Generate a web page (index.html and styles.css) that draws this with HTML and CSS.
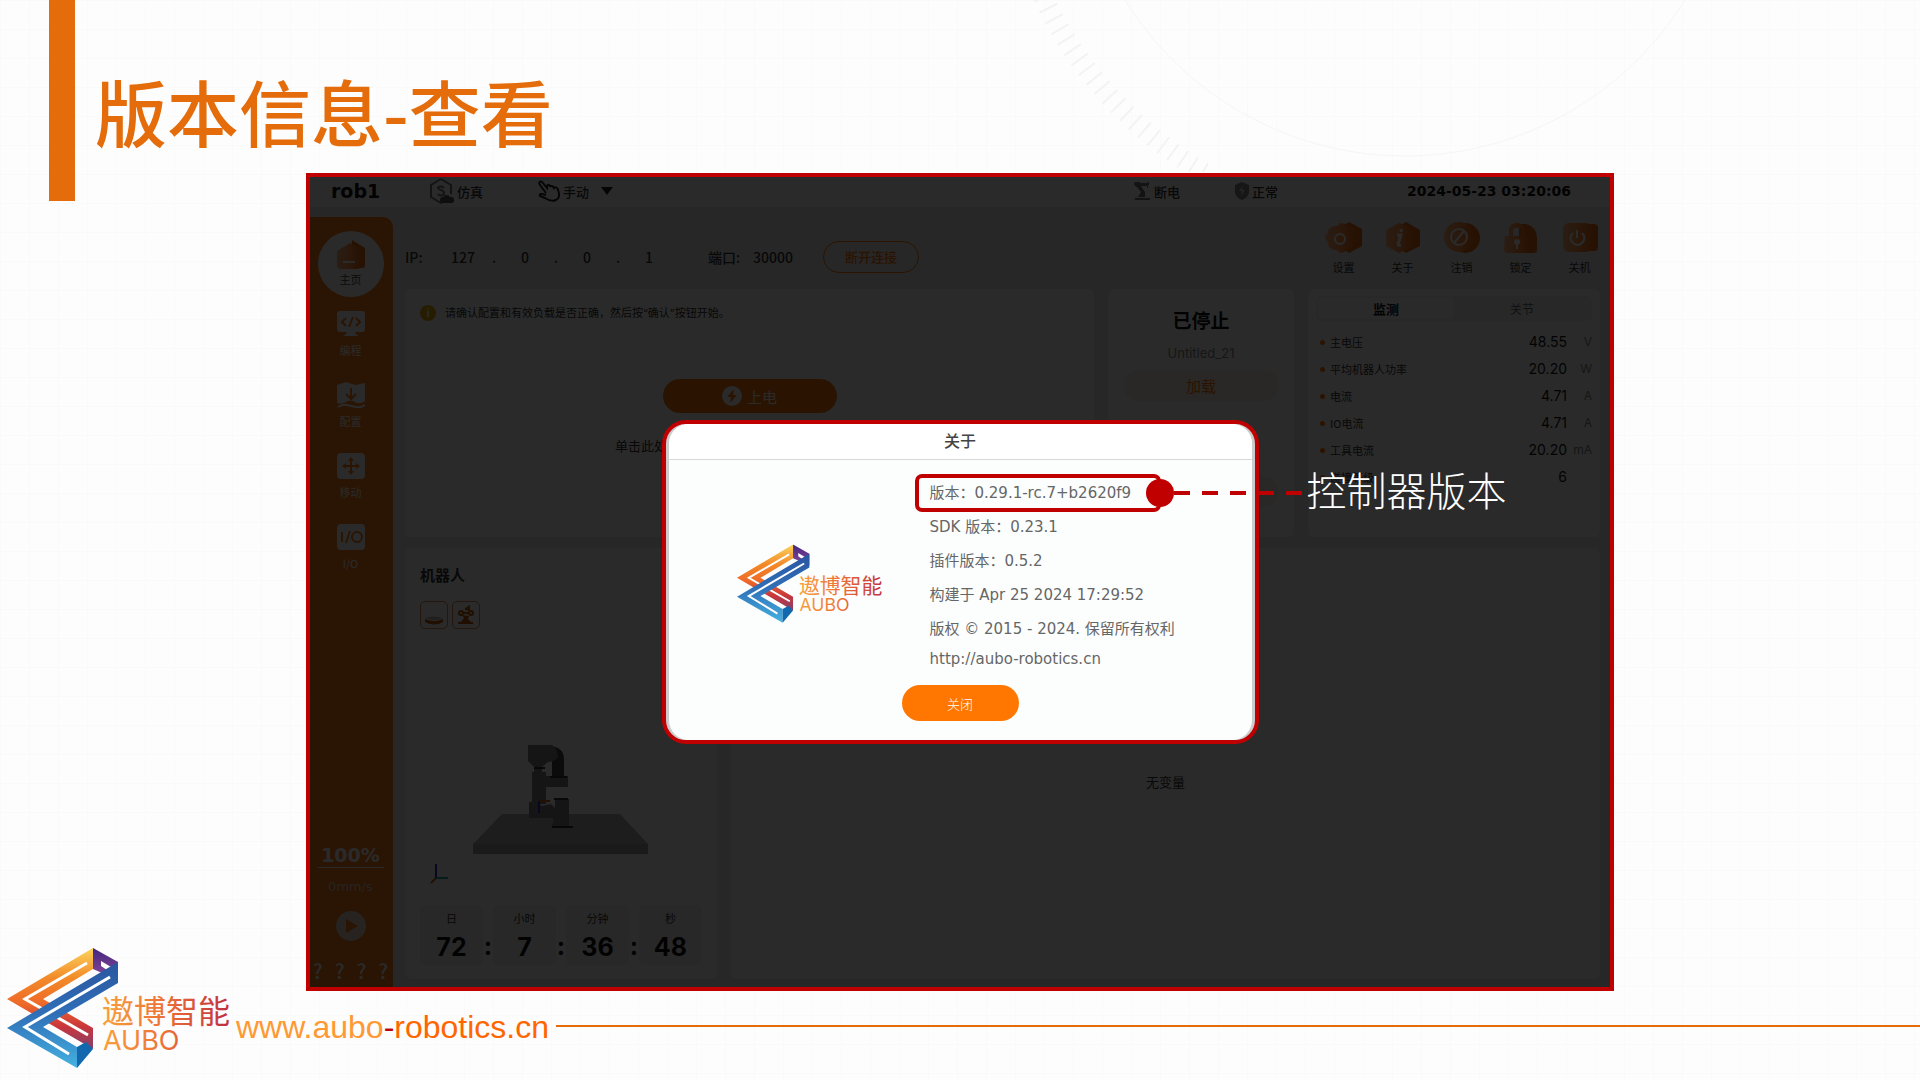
FILE: index.html
```html
<!DOCTYPE html>
<html lang="zh-CN">
<head>
    <meta charset="UTF-8">
    <meta name="viewport" content="width=device-width, initial-scale=1.0">
    <title>版本信息-查看</title>
    <link rel="stylesheet" href="styles.css">
</head>
<body>
    <!-- shared symbols -->
    <svg class="defs" width="0" height="0" aria-hidden="true">
        <defs>
            <linearGradient id="warm" x1="0" y1="0" x2="0" y2="1">
                <stop offset="0" stop-color="#fbd45c"/>
                <stop offset="0.3" stop-color="#f28a28"/>
                <stop offset="0.55" stop-color="#ef6a28"/>
                <stop offset="0.78" stop-color="#c9363c"/>
                <stop offset="1" stop-color="#84406c"/>
            </linearGradient>
            <linearGradient id="cool" x1="0" y1="0" x2="0" y2="1">
                <stop offset="0" stop-color="#2a559f"/>
                <stop offset="0.5" stop-color="#3070b8"/>
                <stop offset="1" stop-color="#45b2e0"/>
            </linearGradient>
            <linearGradient id="violet" x1="0" y1="0" x2="0" y2="1">
                <stop offset="0" stop-color="#43277f"/>
                <stop offset="1" stop-color="#8a4a9c"/>
            </linearGradient>
            <linearGradient id="brand" gradientUnits="userSpaceOnUse" x1="96" y1="0" x2="222" y2="0">
                <stop offset="0" stop-color="#f9a03c"/>
                <stop offset="0.5" stop-color="#ec7036"/>
                <stop offset="1" stop-color="#bf2f40"/>
            </linearGradient>
            <linearGradient id="icon-orange" x1="0" y1="0" x2="1" y2="0">
                <stop offset="0" stop-color="#ffb27a"/>
                <stop offset="0.6" stop-color="#ff8a3c"/>
                <stop offset="1" stop-color="#e86a10"/>
            </linearGradient>
            <symbol id="logo" viewBox="0 0 224 121">
                <path fill="url(#warm)" d="M86 0 0 51l86 50V80L36 51l50-30z"/>
                <path fill="none" stroke="#fff" stroke-width="3" d="M80 15 18 51l63 36"/>
                <path fill="url(#violet)" d="m86 0 25 14v18L86 21z"/>
                <path fill="#fff" d="m94 13 10 6-4 3-6-4z"/>
                <path fill="url(#cool)" d="M111 14 0 80l70 40V99L36 79l75-44z"/>
                <path fill="none" stroke="#fff" stroke-width="3" d="M103 29 18 79l44 27"/>
                <path fill="#1168ae" d="m70 99 9-5 7 7-16 19z"/>
                <text class="logo-cn" x="95" y="75" fill="url(#brand)">遨博智能</text>
                <text class="logo-en" x="96" y="102" fill="url(#brand)">AUBO</text>
            </symbol>
        </defs>
    </svg>

    <svg class="dial" width="820" height="172" viewBox="0 0 820 172" aria-hidden="true">
        <circle cx="410" cy="-173" r="329" fill="none" stroke="#f7f5f5"/>
        <path d="M30-48A400 400 0 0 0 210 173" fill="none" stroke="#f3f3f3" stroke-width="20" stroke-dasharray="2 10"/>
    </svg>

    <div class="slide">
        <header class="slide-header">
            <span class="title-bar"></span>
            <h1>版本信息-查看</h1>
        </header>

        <main class="shot">
            <div class="topbar">
                <strong class="robot-name">rob1</strong>
                <span class="status sim">
                    <svg width="26" height="26" viewBox="0 0 26 26" fill="none" stroke="#777" stroke-width="2">
                        <path d="M12 1 2 7v12l10 6 3-2M12 1l10 6v9"/>
                        <path d="M15 10c-1-2-6-2-6 0s6 2 6 5-5 3-6 1"/>
                        <path fill="#555" stroke="none" d="M14 25a3 3 0 0 1 0-6 4 4 0 0 1 7 0 3 3 0 0 1 2 6z"/>
                    </svg>仿真
                </span>
                <span class="status manual">
                    <svg width="24" height="22" viewBox="0 0 24 22" fill="none" stroke="#222" stroke-width="2">
                        <path d="M9 13 3 5C1 2 4 0 6 3l4 5V6c1-2 3-1 3 1 1-2 3-1 4 1 1-2 4 0 4 2 2 5 1 9-2 10-4 2-8 0-11-2l-5-2c-1-2 1-3 6-1"/>
                    </svg>手动
                    <i class="caret"></i>
                </span>
                <span class="status power">
                    <svg width="18" height="18" viewBox="0 0 18 18" fill="#777">
                        <path d="M1 16h15v2H1zM4 15l3-5-4-5a3 3 0 1 1 3-4h6l3-1v3h-1v3h-1V4H7l4 6v5z"/>
                    </svg>断电
                </span>
                <span class="status normal">
                    <svg width="16" height="18" viewBox="0 0 16 18"><path fill="#888" d="m8 0 7 3v7c0 4-4 7-7 8-3-1-7-4-7-8V3z"/><path fill="#ddd" d="M9 4 5 9h3l-1 5 4-6H8z"/></svg>
                    正常
                </span>
                <time>2024-05-23 03:20:06</time>
            </div>

            <div class="workspace">
                <nav class="sidebar">
                    <a class="nav-item active" href="#">
                        <svg width="30" height="30" viewBox="0 0 30 30"><path fill="#e86a10" d="M16 0 29 8v17q0 3-3 3H15z"/><path fill="url(#icon-orange)" d="m14 3 11 8v14q0 4-4 4H5q-4 0-4-4V11z"/><path stroke="#fff" stroke-width="2" d="M7 22h12"/></svg>
                        主页
                    </a>
                    <a class="nav-item" href="#">
                        <svg width="28" height="26" viewBox="0 0 28 26"><path fill="#fff" d="M3 0h22q3 0 3 3v15q0 3-3 3h-7l1 2 3 2H6l3-2 1-2H3q-3 0-3-3V3q0-3 3-3z"/><path fill="none" stroke="#ff7a12" stroke-width="2" d="m9 7-4 4 4 4M19 7l4 4-4 4M16 6l-4 10"/></svg>
                        编程
                    </a>
                    <a class="nav-item" href="#">
                        <svg width="28" height="26" viewBox="0 0 28 26"><path fill="#fff" d="m0 3 9-3 9 3 10-2v18q-5 4-10 1t-9 0-9 1z"/><path fill="none" stroke="#ff7a12" stroke-width="2" d="M14 6v10M9 12l5 5 5-5"/><path fill="none" stroke="#fff" stroke-width="2" d="M1 25q5-3 9-2t9 2 9-2"/></svg>
                        配置
                    </a>
                    <a class="nav-item" href="#">
                        <svg width="28" height="26" viewBox="0 0 28 26"><rect width="28" height="26" rx="4" fill="#fff"/><path stroke="#ff7a12" stroke-width="2" d="M14 6v14M7 13h14"/><path fill="#ff7a12" d="m14 4 3 4h-6zM14 22l3-4h-6zM5 13l4-3v6zM23 13l-4-3v6z"/></svg>
                        移动
                    </a>
                    <a class="nav-item" href="#">
                        <svg width="28" height="26" viewBox="0 0 28 26"><rect width="28" height="26" rx="4" fill="#fff"/><g fill="none" stroke="#ff7a12" stroke-width="2"><path d="M5 8v10M13 7 9 19"/><ellipse cx="20" cy="13" rx="5" ry="5"/></g></svg>
                        I/O
                    </a>
                    <div class="speed">
                        <strong>100%</strong>
                        <span>0mm/s</span>
                        <button type="button" class="play" aria-label="运行">
                            <svg width="30" height="30" viewBox="0 0 30 30"><circle cx="15" cy="15" r="15" fill="#e6d6ca"/><path fill="#ff7a12" d="m10 8 12 7-12 7z"/></svg>
                        </button>
                    </div>
                    <div class="marks"><span>?</span><span>?</span><span>?</span><span>?</span></div>
                </nav>

                <div class="content">
                    <div class="connect">
                        <label for="ip1">IP:</label>
                        <div class="ip">
                            <input id="ip1" value="127"><i>.</i>
                            <input value="0" aria-label="IP 2"><i>.</i>
                            <input value="0" aria-label="IP 3"><i>.</i>
                            <input value="1" aria-label="IP 4">
                        </div>
                        <label for="port">端口:</label>
                        <input id="port" value="30000">
                        <button type="button" class="disconnect">断开连接</button>
                        <div class="tools">
                            <button type="button"><svg width="38" height="32" viewBox="0 0 38 32"><path fill="#e86a10" d="m24 0 13 7v17l-13 7-8-6V5z"/><path fill="url(#icon-orange)" d="M9 4q4 1 6-3 5 0 7 3 4-1 7 3-1 5 2 9-3 4-2 9-4 2-7 2-2 4-7 4-3-4-7-3-4-2-5-5 1-3-3-6 0-5 3-6-1-4 6-7z"/><circle cx="15" cy="17" r="5" fill="none" stroke="#fff" stroke-width="2"/></svg>设置</button>
                            <button type="button"><svg width="38" height="32" viewBox="0 0 38 32"><path fill="#e86a10" d="m22 0 14 8v16l-14 7-8-6V5z"/><path fill="url(#icon-orange)" d="m15 1 14 7v16l-14 7-13-7V8z"/><path fill="none" stroke="#fff" stroke-width="3" d="M13 13h4l-3 9q0 2 3 1M17 7v3"/></svg>关于</button>
                            <button type="button"><svg width="38" height="32" viewBox="0 0 38 32"><circle cx="22" cy="16" r="15" fill="#e86a10"/><circle cx="16" cy="15" r="15" fill="url(#icon-orange)"/><circle cx="16" cy="15" r="8" fill="none" stroke="#fff" stroke-width="2"/><path stroke="#fff" stroke-width="2" d="m21 9-10 12"/></svg>注销</button>
                            <button type="button"><svg width="38" height="32" viewBox="0 0 38 32"><path fill="#e86a10" d="M17 2h7q11 3 11 14v12q0 3-4 3H17z"/><path fill="url(#icon-orange)" d="M3 14h4V7q1-6 8-6t8 6v7h3v17H6q-4 0-4-4zM11 14h8V8q-4-5-8 0z"/><circle cx="15" cy="20" r="3" fill="#fff"/><path stroke="#fff" stroke-width="2" d="M15 20v7"/></svg>锁定</button>
                            <button type="button"><svg width="38" height="32" viewBox="0 0 38 32"><rect x="12" y="2" width="25" height="27" rx="4" fill="#e86a10"/><rect x="2" y="1" width="29" height="29" rx="6" fill="url(#icon-orange)"/><path fill="none" stroke="#fff" stroke-width="2" d="M12 11q-5 5 0 10 5 4 9 0 5-5 0-10M16 8v8"/></svg>关机</button>
                        </div>
                    </div>

                    <div class="row-top">
                        <section class="card start">
                            <p class="hint"><b>i</b>请确认配置和有效负载是否正确，然后按“确认”按钮开始。</p>
                            <button type="button" class="power-on">
                                <svg width="20" height="20" viewBox="0 0 20 20"><circle cx="10" cy="10" r="10" fill="#fff"/><path fill="#ff7700" d="m12 3-7 8h4l-1 6 7-8h-4z"/></svg>上电
                            </button>
                            <p class="click-here">单击此处</p>
                        </section>
                        <section class="card program">
                            <h2>已停止</h2>
                            <p>Untitled_21</p>
                            <button type="button">加载</button>
                            <span class="pill"></span>
                        </section>
                        <section class="card monitor">
                            <div class="tabs">
                                <button type="button" class="selected">监测</button>
                                <button type="button">关节</button>
                            </div>
                            <table>
                                <tr><th>主电压</th><td>48.55</td><td>V</td></tr>
                                <tr><th>平均机器人功率</th><td>20.20</td><td>W</td></tr>
                                <tr><th>电流</th><td>4.71</td><td>A</td></tr>
                                <tr><th>IO电流</th><td>4.71</td><td>A</td></tr>
                                <tr><th>工具电流</th><td>20.20</td><td>mA</td></tr>
                                <tr><th>碰撞等级</th><td>6</td><td></td></tr>
                            </table>
                        </section>
                    </div>

                    <div class="row-bottom">
                        <section class="card robot">
                            <h3>机器人</h3>
                            <div class="views">
                                <button type="button" aria-label="底座"><svg width="26" height="26" viewBox="0 0 26 26"><path fill="#c05a00" d="M4 17v3q9 5 18 0v-3q-9 4-18 0z"/><path fill="#bbb" d="M4 16q9-3 18 0-9 4-18 0z"/></svg></button>
                                <button type="button" aria-label="机械臂"><svg width="26" height="26" viewBox="0 0 26 26"><path fill="#c05a00" d="M5 20h15v2H5zM8 20l3-4-2-3 7 1-1 3 3 3zM12 6l5-3v6l-5-1z"/><g fill="none" stroke="#c05a00" stroke-width="2"><circle cx="8" cy="11" r="2"/><circle cx="18" cy="11" r="2"/><path d="M10 11h6"/></g></svg></button>
                            </div>
                            <svg class="arm" width="240" height="143" viewBox="0 0 240 143">
                                <path fill="#b0b0ae" d="M82 72h118l28 30H53z"/>
                                <path fill="#a0a09e" d="M53 102h175v10H53z"/>
                                <path fill="#444" d="M131 4q13 2 13 13v20h-12V16z"/>
                                <path fill="#808080" d="M108 3h24q6 4 6 12-4 5-10 5l-6 5v5h-8v-5l-6-6z"/>
                                <path fill="#808080" d="M112 30h14v32h-14zM126 34h22v11h-22zM109 60l7-1 6 5 9-2 4 4v-9h14v26l4 3h-22l2-5v-5h-24z"/>
                                <path stroke="#333" stroke-width="2" d="M114 26h11M130 35h17M134 57h14M132 85h21"/>
                                <path stroke="#2a2ad0" stroke-width="2" d="M119 59v12M16 122v14"/>
                                <path stroke="#18a8a8" stroke-width="2" d="M16 136h12"/>
                                <path stroke="#d06020" stroke-width="2" d="m16 136-5 5M120 59h10"/>
                            </svg>
                            <div class="clock">
                                <div><small>日</small><b>72</b></div><i>:</i>
                                <div><small>小时</small><b>7</b></div><i>:</i>
                                <div><small>分钟</small><b>36</b></div><i>:</i>
                                <div><small>秒</small><b>48</b></div>
                            </div>
                        </section>
                        <section class="card variables">无变量</section>
                    </div>
                </div>
            </div>

            <!-- modal -->
            <div class="overlay">
                <div class="dialog" role="dialog" aria-labelledby="about-title">
                    <div class="dialog-body">
                        <h2 id="about-title">关于</h2>
                        <div class="about">
                            <svg class="about-logo" viewBox="0 0 224 121"><use href="#logo"/></svg>
                            <div class="about-text">
                                <div class="version">
                                    <p>版本：0.29.1-rc.7+b2620f9</p>
                                    <div class="callout"><span class="dot"></span><span class="dashes"></span><strong>控制器版本</strong></div>
                                </div>
                                <p>SDK 版本：0.23.1</p>
                                <p>插件版本：0.5.2</p>
                                <p>构建于 Apr 25 2024 17:29:52</p>
                                <p>版权 © 2015 - 2024. 保留所有权利</p>
                                <a href="http://aubo-robotics.cn">http://aubo-robotics.cn</a>
                            </div>
                        </div>
                        <button type="button" class="close-btn">关闭</button>
                    </div>
                </div>
            </div>
        </main>

        <footer class="slide-footer">
            <svg class="footer-logo" viewBox="0 0 224 121"><use href="#logo"/></svg>
            <a href="http://www.aubo-robotics.cn"><span class="url-light">www.aubo</span><span class="url-dash">-</span><span class="url-deep">robotics.cn</span></a>
            <span class="rule"></span>
        </footer>
    </div>
</body>
</html>
```
FILE: styles.css
```css
* {
    margin: 0;
    padding: 0;
    box-sizing: border-box;
}

body {
    font-family: "Noto Sans CJK SC", sans-serif;
    background-color: #fdfdfd;
    background-image:
        linear-gradient(#fafafa 1px, transparent 1px),
        linear-gradient(90deg, #fafafa 1px, transparent 1px);
    background-size: 29px 29px;
    overflow-x: hidden;
}

button,
input {
    font: inherit;
    color: inherit;
    border: none;
    background: none;
}

button {
    cursor: pointer;
}

a {
    color: inherit;
    text-decoration: none;
}

i {
    font-style: normal;
}

.defs,
.dial {
    position: absolute;
}

.dial {
    top: 0;
    right: 105px;
}

.slide {
    position: relative;
    display: flex;
    flex-direction: column;
    min-height: 100vh;
}

/* header */
.slide-header {
    display: flex;
    height: 201px;
    padding-left: 49px;
    gap: 20px;
}

.title-bar {
    width: 26px;
    background: #e46c0a;
}

.slide-header h1 {
    font-size: 72px;
    font-weight: 500;
    line-height: 108px;
    padding-top: 56px;
    color: #e46c0a;
}

/* screenshot frame */
.shot {
    position: relative;
    flex: 1;
    display: flex;
    flex-direction: column;
    margin: -28px 306px 0;
    border: 4px solid #c00000;
    background: #eaeaea;
    color: #333;
    font-size: 13px;
}

.topbar {
    display: flex;
    align-items: center;
    height: 30px;
    padding: 0 39px 2px 21px;
    background: #fff;
    font-weight: 500;
}

.robot-name {
    width: 98px;
    font: bold 19px "DejaVu Sans", sans-serif;
    color: #111;
}

.status {
    display: flex;
    align-items: center;
    gap: 2px;
}

.sim {
    width: 108px;
}

.caret {
    margin-left: 10px;
    border: 6px solid transparent;
    border-top: 8px solid #222;
    border-bottom: 0;
}

.power {
    margin-left: auto;
    width: 100px;
}

.normal {
    width: 173px;
}

.topbar time {
    font: bold 14px "DejaVu Sans", sans-serif;
    color: #111;
}

.workspace {
    flex: 1;
    display: flex;
    gap: 12px;
    padding-right: 10px;
}

.sidebar {
    display: flex;
    flex-direction: column;
    align-items: center;
    width: 83px;
    margin-top: 10px;
    padding: 14px 2px 0 0;
    border-radius: 0 10px 0 0;
    background: #ff7a12;
    color: #fff;
}

.nav-item {
    display: flex;
    flex-direction: column;
    align-items: center;
    gap: 4px;
    height: 71px;
    padding-top: 9px;
    font-size: 11px;
    line-height: 18px;
}

.nav-item.active {
    width: 66px;
    height: 66px;
    gap: 0;
    border-radius: 50%;
    background: #fff;
    color: #444;
}

.nav-item.active + .nav-item {
    margin-top: 5px;
}

.speed {
    display: flex;
    flex-direction: column;
    align-items: center;
    margin-top: auto;
    font-family: "DejaVu Sans", sans-serif;
}

.speed strong {
    width: 66px;
    border-bottom: 1px solid #fff;
    text-align: center;
    font-size: 19px;
    line-height: 24px;
}

.speed span {
    margin: 9px 0 14px;
    font-size: 13px;
    line-height: 20px;
    color: #e6d6ca;
}

.play {
    height: 30px;
}

.marks {
    display: flex;
    gap: 12px;
    padding: 14px 0 0;
    font-size: 20px;
    font-weight: 500;
    line-height: 32px;
}

.content {
    flex: 1;
    display: flex;
    flex-direction: column;
    gap: 11px;
    min-width: 0;
    padding-bottom: 8px;
}

/* connection row */
.connect {
    display: flex;
    align-items: center;
    height: 71px;
    padding-top: 28px;
    font-size: 14px;
    font-weight: 500;
}

.connect label {
    width: 36px;
}

.connect .ip {
    display: flex;
    align-items: center;
    width: 267px;
}

.ip input {
    width: 44px;
    text-align: center;
}

.ip i {
    width: 18px;
    text-align: center;
}

.connect .ip + label {
    width: 45px;
}

#port {
    width: 70px;
}

.disconnect {
    width: 96px;
    height: 32px;
    border: 1px solid #ff7700;
    border-radius: 16px;
    font-size: 13px;
    color: #ff7700;
}

.tools {
    display: flex;
    align-self: flex-end;
    margin: 0 -9px 2px auto;
}

.tools button {
    display: flex;
    flex-direction: column;
    align-items: center;
    width: 59px;
    gap: 4px;
    font-size: 11px;
    font-weight: 400;
    line-height: 18px;
}

.row-top {
    display: grid;
    grid-template-columns: 689fr 186fr 292fr;
    gap: 14px;
    height: 248px;
}

.row-bottom {
    flex: 1;
    display: flex;
    gap: 14px;
}

.card {
    border-radius: 6px;
    background: #fff;
}

.start {
    padding: 14px 15px;
}

.hint {
    display: flex;
    align-items: center;
    gap: 9px;
    font-family: Inter, "Noto Sans CJK SC", sans-serif;
    font-size: 11px;
    line-height: 20px;
}

.hint b {
    width: 16px;
    height: 16px;
    border-radius: 50%;
    background: #e8a800;
    text-align: center;
    line-height: 16px;
    color: #fff;
}

.power-on {
    display: flex;
    align-items: center;
    justify-content: center;
    gap: 5px;
    width: 174px;
    height: 34px;
    margin: 56px auto 22px;
    border-radius: 17px;
    background: #ff7700;
    font-size: 15px;
    color: #fff;
}

.click-here {
    padding-left: 195px;
    line-height: 22px;
}

.program {
    display: flex;
    flex-direction: column;
    align-items: center;
    padding: 15px;
}

.program h2 {
    font-size: 19px;
    line-height: 32px;
    color: #111;
}

.program p {
    padding: 7px 0;
    font-family: Inter, sans-serif;
    line-height: 20px;
    color: #888;
}

.program button,
.pill {
    width: 100%;
    height: 31px;
    border-radius: 16px;
    background: #fff3e6;
    font-size: 15px;
    color: #ff7700;
}

.pill {
    margin-top: 75px;
}

.monitor {
    padding: 7px 8px;
}

.tabs {
    display: flex;
    height: 25px;
    margin-bottom: 7px;
    padding: 2px;
    border-radius: 5px;
    background: #f4f4f4;
}

.tabs button {
    flex: 1;
    border-radius: 5px;
    font-size: 12px;
    line-height: 20px;
    color: #666;
}

.tabs .selected {
    background: #fff;
    font-size: 13px;
    font-weight: bold;
    color: #111;
}

.monitor table {
    width: 100%;
    border-collapse: collapse;
}

.monitor tr {
    height: 27px;
}

.monitor th {
    font-size: 11px;
    font-weight: 400;
    text-align: left;
}

.monitor th::before {
    content: "";
    display: inline-block;
    width: 5px;
    height: 5px;
    margin: 0 5px 2px 4px;
    border-radius: 50%;
    background: #ff7700;
}

.monitor td {
    font-family: Inter, sans-serif;
    font-size: 14px;
    text-align: right;
    color: #111;
}

.monitor td:last-child {
    width: 25px;
    font-size: 12px;
    color: #888;
}

/* lower cards */
.robot {
    display: flex;
    flex-direction: column;
    width: 312px;
    padding: 16px 15px 14px;
}

.robot h3 {
    font-size: 15px;
    line-height: 22px;
}

.views {
    display: flex;
    gap: 4px;
    padding-top: 15px;
}

.views button {
    width: 28px;
    height: 28px;
    border: 1px solid #e08a50;
    border-radius: 5px;
}

.arm {
    margin-top: auto;
}

.clock {
    display: flex;
    align-items: center;
    justify-content: space-between;
    margin-top: 20px;
}

.clock div {
    display: flex;
    flex-direction: column;
    align-items: center;
    width: 63px;
    height: 60px;
    padding-top: 4px;
    border-radius: 5px;
    background: #f3f3f3;
}

.clock small {
    font-size: 11px;
    line-height: 18px;
}

.clock b {
    font: bold 25px/40px Inter, sans-serif;
    color: #111;
}

.clock i {
    padding-top: 22px;
    font: bold 25px/30px Inter, sans-serif;
    color: #111;
}

.variables {
    flex: 1;
    padding-top: 223px;
    padding-bottom: 40px;
    text-align: center;
    line-height: 22px;
}

/* modal */
.overlay {
    position: absolute;
    inset: 0;
    display: flex;
    align-items: center;
    justify-content: center;
    background: rgba(0, 0, 0, 0.835);
}

.dialog {
    width: 597px;
    padding: 0 3px;
    border: 4px solid #c00000;
    border-radius: 24px;
    background: #ccc;
}

.dialog-body {
    display: flex;
    flex-direction: column;
    align-items: center;
    padding-bottom: 19px;
    border-radius: 20px;
    background: #fcfefd;
}

.dialog h2 {
    width: 100%;
    padding: 2px 0 5px;
    border-bottom: 1px solid #d8d8d8;
    border-radius: 20px 20px 0 0;
    background: #fff;
    font-size: 16px;
    font-weight: 500;
    line-height: 28px;
    text-align: center;
    color: #444;
}

.about {
    display: flex;
    align-items: center;
    align-self: stretch;
    gap: 47px;
    padding: 14px 0 12px 68px;
}

.about-logo {
    width: 146px;
    height: 80px;
    margin-top: 20px;
}

.about-text {
    font: 15px/34px "DejaVu Sans", "Noto Sans CJK TC", sans-serif;
    color: #666;
}

.about-text a {
    display: block;
    line-height: 27px;
}

.version {
    position: relative;
    margin: 0 0 -2px -15px;
    width: 246px;
    height: 38px;
    padding-left: 11px;
    border: 4px solid #c00000;
    border-radius: 7px;
    line-height: 30px;
}

.callout {
    position: absolute;
    top: -11px;
    left: 227px;
    display: flex;
    align-items: center;
    white-space: nowrap;
}

.dot {
    width: 28px;
    height: 28px;
    border-radius: 50%;
    background: #c00000;
}

.dashes {
    width: 128px;
    height: 4px;
    margin-right: 5px;
    background: repeating-linear-gradient(90deg, #c00000 0 16px, transparent 16px 28px);
}

.callout strong {
    margin-top: -8px;
    font: 300 40px/60px "Noto Sans CJK SC", sans-serif;
    color: #fff;
}

.close-btn {
    width: 117px;
    height: 36px;
    border-radius: 18px;
    background: #ff7700;
    font-size: 13px;
    font-weight: 300;
    color: #fff;
}

/* footer */
.slide-footer {
    display: flex;
    align-items: center;
    height: 121px;
    margin: -43px 0 11px;
    padding-left: 7px;
}

.footer-logo {
    position: relative;
    width: 224px;
    height: 121px;
}

.logo-cn {
    font: 400 32px "Noto Sans CJK SC", sans-serif;
}

.logo-en {
    font: 400 27px Inter, sans-serif;
}

.slide-footer a {
    margin: 36px 7px 0 5px;
    font: 32px/36px "Liberation Sans", sans-serif;
}

.url-light {
    color: #ff9933;
}

.url-dash {
    color: #c00000;
}

.url-deep {
    color: #ff6600;
}

.rule {
    flex: 1;
    height: 2px;
    margin-top: 34px;
    background: #e46c0a;
}
```
